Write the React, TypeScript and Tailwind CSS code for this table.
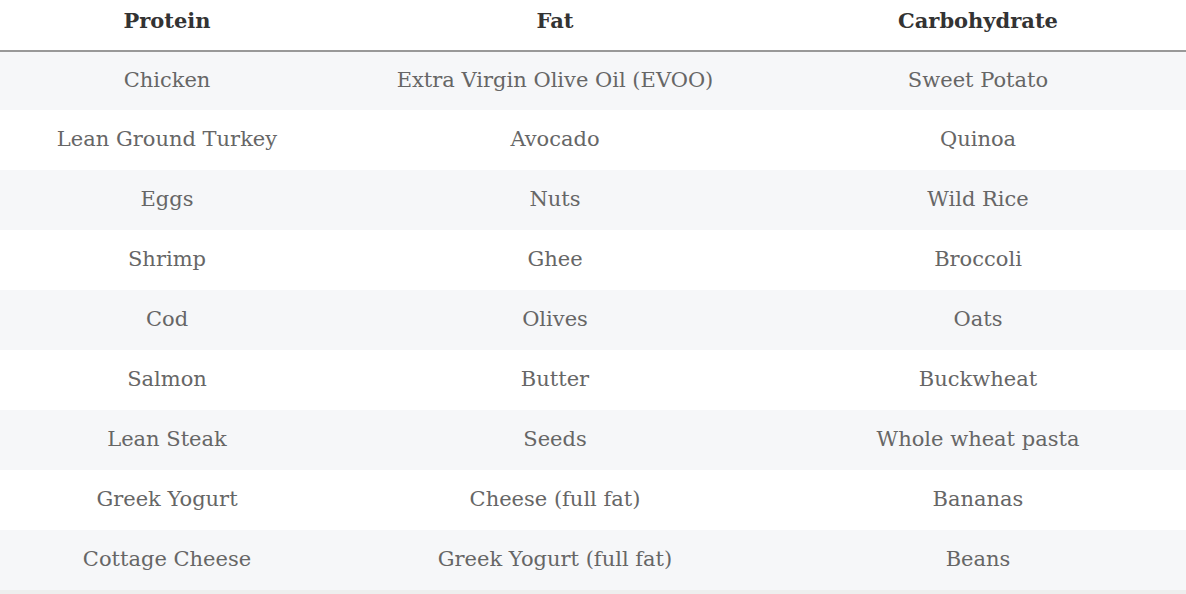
import React from "react";

const rows: [string, string, string][] = [
  ["Chicken", "Extra Virgin Olive Oil (EVOO)", "Sweet Potato"],
  ["Lean Ground Turkey", "Avocado", "Quinoa"],
  ["Eggs", "Nuts", "Wild Rice"],
  ["Shrimp", "Ghee", "Broccoli"],
  ["Cod", "Olives", "Oats"],
  ["Salmon", "Butter", "Buckwheat"],
  ["Lean Steak", "Seeds", "Whole wheat pasta"],
  ["Greek Yogurt", "Cheese (full fat)", "Bananas"],
  ["Cottage Cheese", "Greek Yogurt (full fat)", "Beans"],
];

export default function App() {
  return (
    <div className="w-[1186px] h-[594px] bg-white overflow-hidden" style={{ fontFamily: '"DejaVu Serif", "Liberation Serif", serif' }}>
      <div className="grid grid-cols-[334px_442px_404px] h-[52px] border-b-2 border-[#999999] pb-[8px] text-[21px] font-bold text-[#333333]">
        <div className="flex items-center justify-center">Protein</div>
        <div className="flex items-center justify-center">Fat</div>
        <div className="flex items-center justify-center">Carbohydrate</div>
      </div>
      {rows.map((r, i) => (
        <div
          key={i}
          className={`grid grid-cols-[334px_442px_404px] ${i === 0 ? "h-[58px]" : "h-[60px]"} ${i % 2 === 0 ? "bg-[#f6f7f9]" : "bg-white"} text-[21px] text-[#666666]`}
        >
          {r.map((c, j) => (
            <div key={j} className="flex items-center justify-center pb-[1px]">
              {c}
            </div>
          ))}
        </div>
      ))}
      <div className="h-[4px] bg-[#eeeeee]" />
    </div>
  );
}
